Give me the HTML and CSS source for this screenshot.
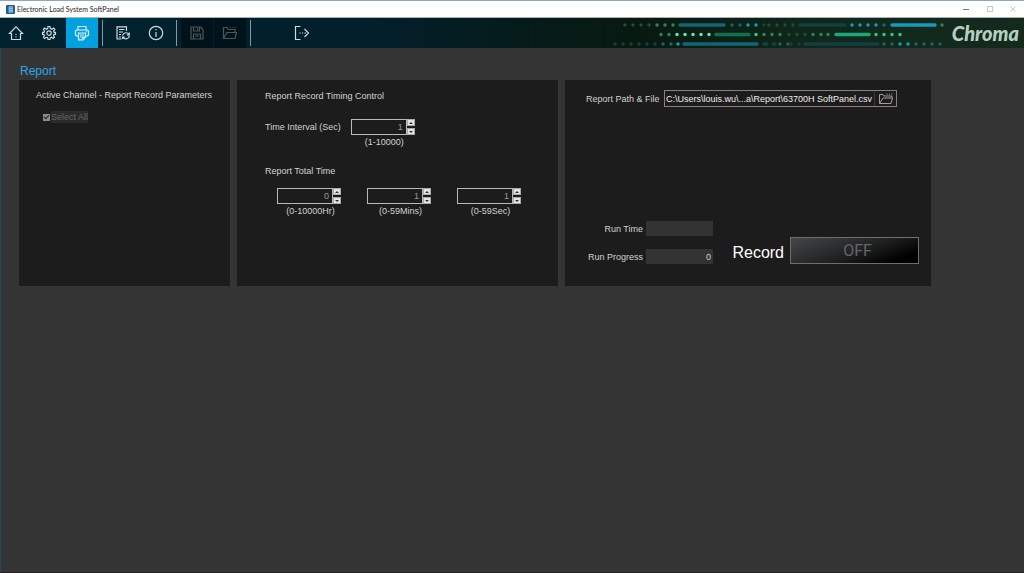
FILE: index.html
```
<!DOCTYPE html>
<html lang="en">
<head>
  <meta charset="UTF-8" />
  <meta name="viewport" content="width=device-width, initial-scale=1.0"/>
  <title>Electronic Load System SoftPanel</title>
  <link rel="stylesheet" href="styles.css">
</head>
<body>
  <div class="window">
    <header class="titlebar">
      <svg class="app-icon" viewBox="0 0 10 10"><rect width="10" height="10" rx="1" fill="#1a5f93"/><rect x="3" y="1.5" width="4.5" height="7" fill="#a9d3ee"/><path d="M4 3h2.500M4 5h2.500M4 7h2.500" stroke="#1a5f93" stroke-width=".7"/></svg>
      <span class="app-title">Electronic Load System SoftPanel</span>
      <div class="window-buttons">
        <button class="win-btn minimize" aria-label="Minimize"><svg viewBox="0 0 8 8"><path d="M1 4.500h6"/></svg></button>
        <button class="win-btn" aria-label="Maximize" disabled><svg viewBox="0 0 8 8"><rect x="1.500" y="1.500" width="5" height="5"/></svg></button>
        <button class="win-btn" aria-label="Close"><svg viewBox="0 0 8 8"><path d="M1.500 1.500l5 5M6.500 1.500l-5 5"/></svg></button>
      </div>
    </header>

    <nav class="toolbar">
      <div class="tool-group">
        <button class="tool" aria-label="Home"><svg viewBox="0 0 16 16"><path d="M1.500 8.500L8 1.800l6.500 6.700H12.500V14.500H3.500V8.500z"/><path d="M8 9v1M8 11.500v1"/></svg></button>
        <button class="tool" aria-label="Settings"><svg viewBox="0 0 16 16"><path d="M7 1.500h2l.3 2 1.500.7 1.700-1.200 1.300 1.400-1.200 1.700.5 1.200h1.400v2h-1.500l-.6 1.300 1.100 1.500-1.400 1.400-1.600-1.200-1.200.6-.3 1.600H7l-.3-1.700-1.400-.5-1.600 1.200-1.300-1.400 1.100-1.600-.6-1.200H1.500v-2h1.500l.5-1.300-1.100-1.600 1.300-1.400 1.600 1.200 1.400-.7z"/><circle cx="8" cy="8.100" r="2.200"/></svg></button>
        <button class="tool active" aria-label="Report"><svg viewBox="0 0 16 16"><path d="M4 5V1.500h8V5M4 11H2.500l-1-1V6l1-1h11l1 1v4l-1 1H12M4.500 8h7v4l-2.500 2.800H4.500z"/><path d="M6 10h4M6 12h2.500M9 14.500V12h2.500M12 6.700h1"/></svg></button>
      </div>
      <span class="divider"></span>
      <div class="tool-group">
        <button class="tool" aria-label="Recall log"><svg viewBox="0 0 16 16"><path d="M6.500 14H2V1.800h9.500V6M4 4.500h5.500M4 7h4M4 9.500h2M4 12h2"/><path d="M7.500 10.500c1-3.500 5-3.500 6.500-1M14.300 7.500v2.300h-2.500M14.500 11c-1 3.500-5 3.500-6.500 1.300M7.600 14v-2h2.300"/></svg></button>
        <button class="tool" aria-label="Information"><svg viewBox="0 0 16 16"><circle cx="8" cy="8" r="6.700"/><path d="M8 7v5M8 4v1.300"/></svg></button>
      </div>
      <span class="divider"></span>
      <div class="tool-group">
        <button class="tool" aria-label="Save" disabled><svg viewBox="0 0 16 16"><path d="M2 2h9.500L14 4.500V14H2zM4.500 2v4h6V2M8.500 3v2M4.500 14V9h7v5M6 11h4"/></svg></button>
        <button class="tool" aria-label="Open" disabled><svg viewBox="0 0 16 16"><path d="M1.500 13.500v-11H5l1.500 2h6.500v3M1.500 13.500h11.500l1.500-6H5zM8 2.500h1M10.500 2.500h1M13 2.500h1"/></svg></button>
      </div>
      <span class="divider"></span>
      <button class="tool exit" aria-label="Exit"><svg viewBox="0 0 16 16"><path d="M6.500 1.500h-5v13h5M10.500 4l4 4-4 4M5.500 8h1.200M8 8h1.200M10.500 8h1.500"/></svg></button>

      <!-- trace pattern: each group shares one colour, dots are zero-length round strokes -->
      <svg class="traces" viewBox="610 18 336 30">
        <g class="dim-green">
          <path d="M623 25h0M631 25h0M639 25h0M647 25h0M767 25h0M775 25h0M783 25h0M791 25h0"/>
          <path d="M787 34.500h0M795 34.500h0M803 34.500h0"/>
        </g>
        <g class="green">
          <path d="M655 25h0M663 25h0M671 25h0M940 25h0"/>
          <path d="M659 34.500h0M667 34.500h0M762 34.500h0M770 34.500h0M778 34.500h0M811 34.500h0M819 34.500h0M826 34.500h0"/>
        </g>
        <path class="mint" d="M675 34.500h0M683 34.500h0M691 34.500h0M699 34.500h0M707 34.500h0"/>
        <path class="deep-green" d="M714 34.500h33"/>
        <path class="emerald" d="M834 34.500h33"/>
        <path class="bright-green" d="M754 34.500h0M874 34.500h0M882 34.500h0M890 34.500h0M898 34.500h0"/>
        <g class="teal">
          <path d="M678 25h44M730 25h0M738 25h0M882 25h0"/>
          <path d="M661 44h0M669 44h0M682 44h73M778 44h0M786 44h0M882 44h0M890 44h0M914 44h0M922 44h0M930 44h0M938 44h0"/>
        </g>
        <g class="dim-teal">
          <path d="M762 25h0M798 25h45"/>
          <path d="M613 44h0M621 44h0M629 44h0M637 44h0M645 44h0M653 44h0M762 44h3M771 44h2M789 44h0M797 44h0M803 44h73"/>
        </g>
        <g class="cyan">
          <path d="M746 25h0M754 25h0M850 25h0M858 25h0M866 25h0M874 25h0M890 25h43"/>
          <path d="M676 44h0M898 44h0M906 44h0"/>
        </g>
      </svg>
      <span class="brand">Chroma</span>
    </nav>

    <main class="content">
      <h1>Report</h1>
      <div class="panels">
        <section class="panel channels">
          <h2>Active Channel - Report Record Parameters</h2>
          <label class="select-all"><input type="checkbox" checked disabled><span>Select All</span></label>
        </section>

        <section class="panel timing">
          <h2>Report Record Timing Control</h2>
          <div class="interval">
            <label for="interval">Time Interval (Sec)</label>
            <div class="spinner">
              <div class="spin-box">
                <input type="number" id="interval" min="1" max="10000" value="1">
                <div class="steps"><button class="up" aria-label="Increase"></button><button class="down" aria-label="Decrease"></button></div>
              </div>
              <span class="range">(1-10000)</span>
            </div>
          </div>
          <h2 class="total-title">Report Total Time</h2>
          <div class="total">
            <div class="spinner">
              <div class="spin-box">
                <input type="number" id="hours" min="0" max="10000" value="0">
                <div class="steps"><button class="up" aria-label="Increase"></button><button class="down" aria-label="Decrease"></button></div>
              </div>
              <label class="range" for="hours">(0-10000Hr)</label>
            </div>
            <div class="spinner">
              <div class="spin-box">
                <input type="number" id="minutes" min="0" max="59" value="1">
                <div class="steps"><button class="up" aria-label="Increase"></button><button class="down" aria-label="Decrease"></button></div>
              </div>
              <label class="range" for="minutes">(0-59Mins)</label>
            </div>
            <div class="spinner">
              <div class="spin-box">
                <input type="number" id="seconds" min="0" max="59" value="1">
                <div class="steps"><button class="up" aria-label="Increase"></button><button class="down" aria-label="Decrease"></button></div>
              </div>
              <label class="range" for="seconds">(0-59Sec)</label>
            </div>
          </div>
        </section>

        <section class="panel record">
          <div class="path-row">
            <label for="path">Report Path &amp; File</label>
            <div class="path-box">
              <input type="text" id="path" value="C:\Users\louis.wu\...a\Report\63700H SoftPanel.csv">
              <button class="browse" aria-label="Browse"><svg viewBox="0 0 16 12"><path d="M1.500 10.500v-9H5l1 1.500h8v2M1.500 10.500h11.500l1.500-5.500H5zM8.500 1h1M11 1h1M13.500 1h1"/></svg></button>
            </div>
          </div>
          <div class="run-row">
            <div class="readouts">
              <label for="run-time">Run Time</label>
              <input type="text" id="run-time" readonly>
              <label for="run-progress">Run Progress</label>
              <input type="text" id="run-progress" value="0" readonly>
            </div>
            <span class="record-label" id="record-label">Record</span>
            <button class="record-btn" aria-describedby="record-label">OFF</button>
          </div>
        </section>
      </div>
    </main>
  </div>
</body>
</html>
```
FILE: styles.css
```
* {
  box-sizing: border-box;
}

body {
  margin: 0;
  font-family: "Liberation Sans", Arial, sans-serif;
  font-size: 9px;
  line-height: 12px;
  color: #d2d2d2;
  background-color: #343434;
}

button, input {
  margin: 0;
  padding: 0;
  border: none;
  border-radius: 0;
  background: none;
  font: inherit;
  color: inherit;
}

h1, h2 {
  margin: 0;
  font-weight: normal;
}

.window {
  min-height: 100vh;
  border-top: 1px solid #8da6bb;
  border-bottom: 1px solid #252027;
  box-shadow: inset 1px 0 #24495b;
}

/* title bar */
.titlebar {
  display: flex;
  align-items: center;
  height: 17px;
  padding-left: 6px;
  background-color: #fff;
  border-bottom: 1px solid #a9b4b6;
}

.app-icon {
  width: 9px;
  height: 9px;
}

.app-title {
  margin-left: 2px;
  font-family: Lato, "Noto Sans", sans-serif;
  font-size: 7px;
  color: #222;
}

.window-buttons {
  display: flex;
  margin-left: auto;
}

.win-btn {
  display: flex;
  justify-content: center;
  width: 24px;
}

.win-btn:last-child {
  width: 22px;
}

.win-btn svg {
  width: 8px;
  height: 8px;
  fill: none;
  stroke: #c9c9c9;
}

.minimize svg {
  stroke: #777;
}

/* toolbar */
.toolbar {
  display: flex;
  align-items: center;
  height: 30px;
  background: linear-gradient(90deg, #01232f, #021f2b 36%, #08190f 62%, #10281a 80%, #142a1c);
}

.tool-group {
  display: flex;
  gap: 1px;
}

.tool {
  display: flex;
  align-items: center;
  justify-content: center;
  width: 32px;
  height: 30px;
}

.tool svg {
  width: 16px;
  height: 16px;
  fill: none;
  stroke: #cfdadd;
  stroke-width: 1.2;
}

.tool.active {
  background-color: #03a0df;
}

.tool.active svg {
  stroke: #d9f3ff;
}

.tool:disabled {
  background-color: #01131a;
}

.tool:disabled svg {
  stroke: #4d5557;
}

.divider {
  width: 1px;
  height: 26px;
  margin: 0 4px;
  background-color: #8a989c;
}

.exit {
  margin-left: 31px;
}

.traces {
  width: 336px;
  height: 30px;
  margin-left: auto;
  fill: none;
  stroke-width: 3.5;
  stroke-linecap: round;
}

.dim-green { stroke: #214c3a; }
.green { stroke: #32805f; }
.mint { stroke: #63e8b5; }
.deep-green { stroke: #107052; }
.emerald { stroke: #1aa87b; }
.bright-green { stroke: #2fca8c; }
.teal { stroke: #136476; }
.dim-teal { stroke: #123f45; }
.cyan { stroke: #169bc0; }

.brand {
  margin: 0 5px 0 4px;
  font-family: Lato, sans-serif;
  font-size: 20px;
  line-height: 24px;
  font-weight: 900;
  font-style: italic;
  color: #b5d0c2;
}

/* report page */
.content {
  padding: 16px 19px 0;
}

h1 {
  margin-bottom: 2px;
  padding-left: 1px;
  font-size: 12px;
  line-height: 14px;
  color: #2ba5e8;
}

h2 {
  font-size: 9px;
  line-height: 12px;
}

.panels {
  display: grid;
  grid-template-columns: 211fr 321fr 366fr;
  gap: 7px;
  max-width: 912px;
}

.panel {
  min-height: 206px;
  padding: 10px 28px;
  background-color: #1c1c1c;
}

.channels {
  padding: 9px 17px;
}

.select-all {
  display: flex;
  align-items: center;
  gap: 1px;
  margin-top: 10px;
  padding-left: 7px;
  color: #666;
}

.select-all span {
  background-color: #2b2b2b;
}

.select-all input {
  appearance: none;
  width: 7px;
  height: 7px;
  background-color: #8b8b8b;
}

.select-all input:checked::before {
  content: "";
  display: block;
  width: 4px;
  height: 2px;
  margin: 1px;
  border: solid #222;
  border-width: 0 0 1px 1px;
  transform: rotate(-45deg);
}

.interval {
  display: flex;
  gap: 10px;
  margin-top: 17px;
}

.interval label {
  line-height: 16px;
}

.total-title {
  margin-top: 17px;
}

.total {
  display: flex;
  gap: 26px;
  margin-top: 11px;
  padding-left: 12px;
}

.spinner {
  display: flex;
  flex-direction: column;
  align-items: center;
  gap: 1px;
}

.spin-box {
  display: flex;
}

.spin-box input {
  appearance: textfield;
  width: 56px;
  height: 16px;
  padding-right: 3px;
  border: 1px solid #bababa;
  text-align: right;
  color: #999;
}

.spin-box input::-webkit-inner-spin-button {
  appearance: none;
  margin: 0;
}

.steps {
  display: flex;
  flex-direction: column;
  justify-content: space-between;
}

.steps button {
  display: flex;
  align-items: center;
  justify-content: center;
  width: 8px;
  height: 7px;
  border: 1px solid #aaa;
  background-color: #e4e4e4;
}

.steps button::before {
  content: "";
  border: solid transparent;
  border-width: 0 2px;
}

.steps .up::before {
  border-bottom: 2px solid #333;
}

.steps .down::before {
  border-top: 2px solid #333;
}

.range {
  padding-left: 3px;
}

/* record panel */
.record {
  display: flex;
  flex-direction: column;
  justify-content: space-between;
  padding: 10px 12px 22px 21px;
}

.path-row {
  display: flex;
  align-items: center;
  justify-content: space-between;
  padding-right: 22px;
}

.path-box {
  display: flex;
  width: 233px;
  height: 17px;
  border: 1px solid #8a7f7c;
}

.path-box input {
  flex: 1;
  min-width: 0;
  padding-left: 1px;
  color: #eee;
}

.browse {
  display: flex;
  align-items: center;
  justify-content: center;
  width: 22px;
  border-left: 1px solid #3c3838;
}

.browse svg {
  width: 16px;
  height: 12px;
  fill: none;
  stroke: #a39c9a;
}

.run-row {
  display: flex;
  align-items: flex-end;
}

.readouts {
  display: grid;
  grid-template-columns: 57px 67px;
  align-items: center;
  gap: 13px 3px;
  text-align: right;
}

.readouts label {
  white-space: nowrap;
}

.readouts input {
  width: 100%;
  height: 15px;
  padding-right: 2px;
  background-color: #333;
  text-align: right;
}

.record-label {
  margin-left: auto;
  font-size: 16px;
  line-height: 22px;
  color: #fff;
}

.record-btn {
  width: 129px;
  height: 27px;
  margin-left: 6px;
  padding-left: 6px;
  border: 1px solid #6e6e6e;
  background: linear-gradient(160deg, #464749, #1d1e1f 55%, #000 85%);
  font-family: Roboto, sans-serif;
  font-size: 16px;
  color: #666;
}
```
